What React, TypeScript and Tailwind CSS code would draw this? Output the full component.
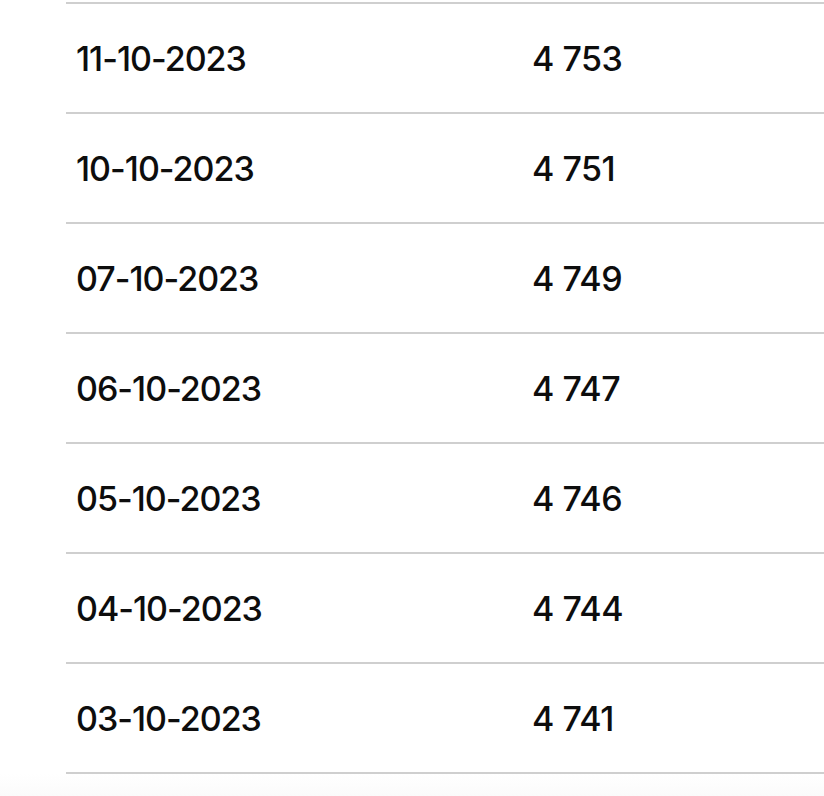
import React from 'react';

const rows = [
  { date: '11-10-2023', value: '4 753' },
  { date: '10-10-2023', value: '4 751' },
  { date: '07-10-2023', value: '4 749' },
  { date: '06-10-2023', value: '4 747' },
  { date: '05-10-2023', value: '4 746' },
  { date: '04-10-2023', value: '4 744' },
  { date: '03-10-2023', value: '4 741' },
];

export default function App() {
  return (
    <div className="w-[824px] h-[796px] overflow-hidden bg-white font-['Inter',sans-serif] text-[#0d0d0d]">
      <div className="pl-[66px] pt-[2px] bg-white">
        {rows.map((r) => (
          <div key={r.date} className="flex items-center h-[110px] border-t-2 border-[#cfcfcf]">
            <div className="w-[466px] pl-[10px] text-[34px] font-medium tracking-[-1px]">{r.date}</div>
            <div className="text-[34px] font-medium tracking-[-0.5px]">{r.value}</div>
          </div>
        ))}
        <div className="border-t-2 border-[#cfcfcf]" />
      </div>
      <div className="h-[40px] bg-gradient-to-b from-white to-[#f7f7f7]" />
    </div>
  );
}
